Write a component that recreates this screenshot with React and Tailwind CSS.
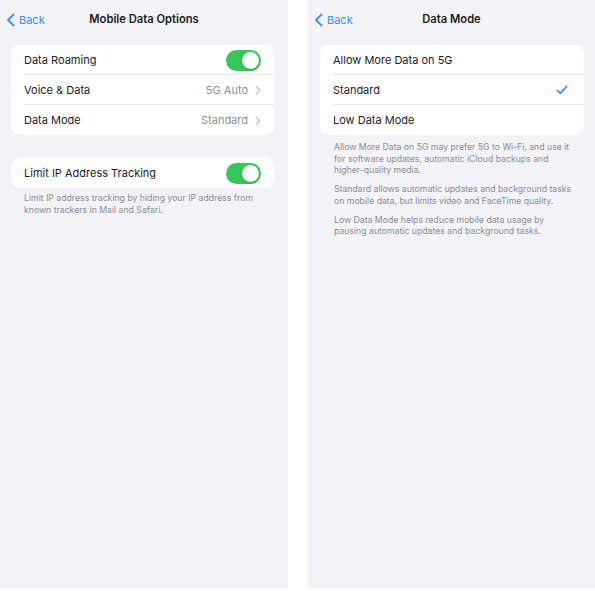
import React from 'react';

const font = { fontFamily: 'Inter, "Liberation Sans", sans-serif' };

function BackChevron() {
  return (
    <svg width="9" height="14" viewBox="0 0 9 14" fill="none">
      <path d="M7.5 1.5L2 7l5.5 5.5" stroke="#3d8ef0" strokeWidth="1.8" strokeLinecap="round" strokeLinejoin="round" />
    </svg>
  );
}

function Chevron() {
  return (
    <svg width="6" height="10" viewBox="0 0 6 10" fill="none">
      <path d="M1.2 1.2L4.8 5L1.2 8.8" stroke="#c4c4c8" strokeWidth="1.3" strokeLinecap="round" strokeLinejoin="round" />
    </svg>
  );
}

function Check() {
  return (
    <svg width="12" height="10" viewBox="0 0 12 10" fill="none" className="mr-[3px]">
      <path d="M1.3 5.3L4.4 8.4L10.7 1.4" stroke="#3d8ef0" strokeWidth="1.7" strokeLinecap="round" strokeLinejoin="round" />
    </svg>
  );
}

function Toggle() {
  return (
    <div className="w-[35px] h-[21px] rounded-full bg-[#34c759] flex items-center justify-end p-[2px]">
      <div className="w-[17px] h-[17px] rounded-full bg-white shadow-[0_1px_2px_rgba(0,0,0,0.2)]" />
    </div>
  );
}

function Header({ title }) {
  return (
    <div className="relative h-[38px] flex items-center justify-center">
      <div className="absolute left-[6px] top-[12px] flex items-center gap-[4px] text-[#3d8ef0] text-[11px]">
        <BackChevron />
        <span>Back</span>
      </div>
      <span className="text-[11.2px] font-semibold text-[#1c1c1e]">{title}</span>
    </div>
  );
}

function Row({ label, right, last }) {
  return (
    <div className="pl-[13px]">
      <div className={`h-[30px] pt-[1px] flex items-center justify-between pr-[13px] ${last ? '' : 'border-b border-[#e6e6ea]'}`}>
        <span className="text-[11px] text-[#1c1c1e]">{label}</span>
        {right}
      </div>
    </div>
  );
}

function Value({ text }) {
  return (
    <div className="flex items-center gap-[7px] text-[11px] text-[#8e8e93]">
      <span>{text}</span>
      <Chevron />
    </div>
  );
}

export default function App() {
  return (
    <div className="w-[595px] h-[591px] bg-white flex gap-[20px] pb-[3px]" style={font}>
      {/* Left screen */}
      <div className="w-[288px] h-full bg-[#f2f2f7]">
        <Header title="Mobile Data Options" />
        <div className="mt-[7px] mx-[11px] mr-[14px] bg-white rounded-[9px] overflow-hidden">
          <Row label="Data Roaming" right={<Toggle />} />
          <Row label="Voice & Data" right={<Value text="5G Auto" />} />
          <Row label="Data Mode" right={<Value text="Standard" />} last />
        </div>
        <div className="mt-[23px] mx-[11px] mr-[14px] bg-white rounded-[9px] overflow-hidden">
          <Row label="Limit IP Address Tracking" right={<Toggle />} last />
        </div>
        <p className="mt-[5px] px-[24px] text-[8.7px] leading-[11.5px] text-[#8e8e93]">
          Limit IP address tracking by hiding your IP address from known trackers in Mail and Safari.
        </p>
      </div>

      {/* Right screen */}
      <div className="flex-1 h-full bg-[#f2f2f7]">
        <Header title="Data Mode" />
        <div className="mt-[7px] ml-[12px] mr-[11px] bg-white rounded-[9px] overflow-hidden">
          <Row label="Allow More Data on 5G" />
          <Row label="Standard" right={<Check />} />
          <Row label="Low Data Mode" last />
        </div>
        <div className="mt-[7px] pl-[26px] pr-[22px] text-[8.7px] leading-[11.5px] text-[#8e8e93] flex flex-col gap-[7.5px]">
          <p>Allow More Data on 5G may prefer 5G to Wi-Fi, and use it for software updates, automatic iCloud backups and higher-quality media.</p>
          <p>Standard allows automatic updates and background tasks on mobile data, but limits video and FaceTime quality.</p>
          <p>Low Data Mode helps reduce mobile data usage by pausing automatic updates and background tasks.</p>
        </div>
      </div>
    </div>
  );
}
